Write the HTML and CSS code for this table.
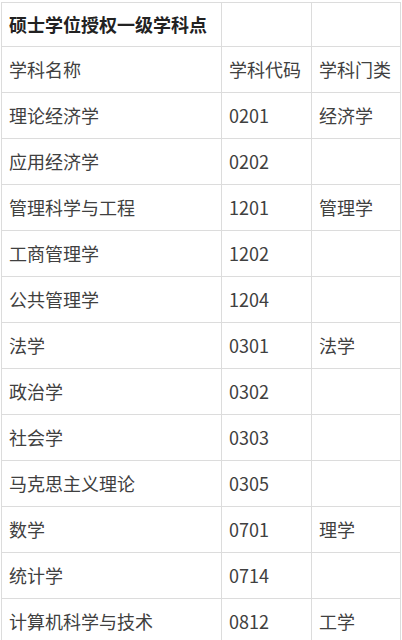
FILE: index.html
```html
<!DOCTYPE html>
<html lang="zh">
<head>
<meta charset="utf-8">
<link rel="stylesheet" href="styles.css">
</head>
<body>
<table class="grid">
  <colgroup><col class="c1"><col class="c2"><col class="c3"></colgroup>
  <tr class="title-row"><td class="title">硕士学位授权一级学科点</td><td></td><td></td></tr>
  <tr><td>学科名称</td><td>学科代码</td><td>学科门类</td></tr>
  <tr><td>理论经济学</td><td>0201</td><td>经济学</td></tr>
  <tr><td>应用经济学</td><td>0202</td><td></td></tr>
  <tr><td>管理科学与工程</td><td>1201</td><td>管理学</td></tr>
  <tr><td>工商管理学</td><td>1202</td><td></td></tr>
  <tr><td>公共管理学</td><td>1204</td><td></td></tr>
  <tr><td>法学</td><td>0301</td><td>法学</td></tr>
  <tr><td>政治学</td><td>0302</td><td></td></tr>
  <tr><td>社会学</td><td>0303</td><td></td></tr>
  <tr><td>马克思主义理论</td><td>0305</td><td></td></tr>
  <tr><td>数学</td><td>0701</td><td>理学</td></tr>
  <tr><td>统计学</td><td>0714</td><td></td></tr>
  <tr><td>计算机科学与技术</td><td>0812</td><td>工学</td></tr>
</table>
</body>
</html>
```
FILE: styles.css
```css
html, body {
  margin: 0;
  padding: 0;
  background: #fff;
}
body {
  padding: 2px 0 0 1px;
  font-family: "Noto Sans CJK SC", "Noto Sans", sans-serif;
}
.grid {
  border-collapse: collapse;
  table-layout: fixed;
  width: 399px;
  font-size: 18px;
  color: #404040;
}
.c1 { width: 220px; }
.c2 { width: 90px; }
.c3 { width: 89px; }
.grid td {
  border: 1px solid #dcdcdc;
  height: 46px;
  padding: 0 0 2px 7px;
  vertical-align: middle;
  white-space: nowrap;
  line-height: 1;
  box-sizing: border-box;
}
.grid .title-row td {
  height: 44px;
}
.grid td.title {
  font-weight: bold;
  color: #222;
}
```
